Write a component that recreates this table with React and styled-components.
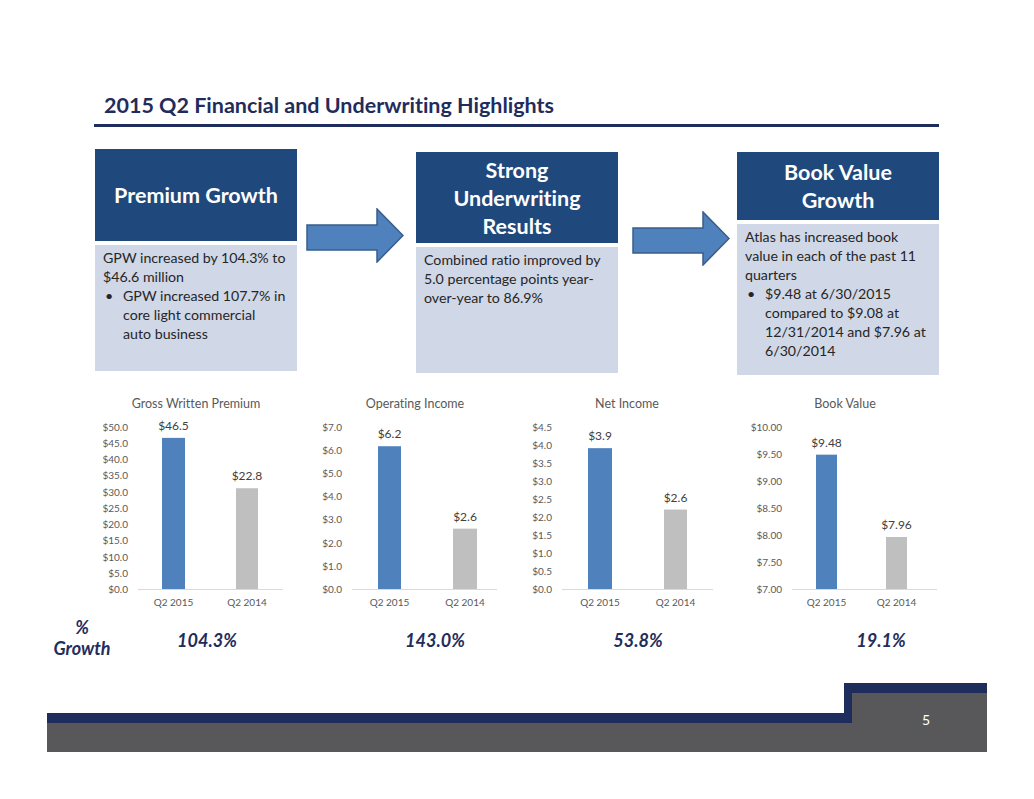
import React from 'react';
import styled, { createGlobalStyle } from 'styled-components';

const NAVY = '#1f2d5c';
const BLUE = '#1f497d';
const BAR_BLUE = '#4f81bd';
const BAR_GREY = '#bfbfbf';

const GlobalStyle = createGlobalStyle`
  body {
    margin: 0;
    background: #fff;
    font-family: Lato, "Open Sans", Arial, sans-serif;
    font-variant-ligatures: none;
  }
`;

// chart frames, in page pixels (x) so they line up with the slide
const CHART_TOP = 393;
const AXIS_TOP = 426.5;
const AXIS_BOTTOM = 589;

const charts = [
  {
    title: 'Gross Written Premium',
    left: 95,
    width: 200,
    titleX: 196,
    ticks: ['$50.0', '$45.0', '$40.0', '$35.0', '$30.0', '$25.0', '$20.0', '$15.0', '$10.0', '$5.0', '$0.0'],
    labelRight: 128,
    axis: [138, 283],
    min: 0,
    max: 50,
    bars: [
      { x: 162, w: 23, value: 46.5, label: '$46.5', color: BAR_BLUE, cat: 'Q2 2015' },
      { x: 236, w: 22, value: 31, label: '$22.8', color: BAR_GREY, cat: 'Q2 2014' },
    ],
  },
  {
    title: 'Operating Income',
    left: 295,
    width: 215,
    titleX: 415,
    ticks: ['$7.0', '$6.0', '$5.0', '$4.0', '$3.0', '$2.0', '$1.0', '$0.0'],
    labelRight: 342,
    axis: [352, 497],
    min: 0,
    max: 7,
    bars: [
      { x: 378, w: 23, value: 6.15, label: '$6.2', color: BAR_BLUE, cat: 'Q2 2015' },
      { x: 453, w: 24, value: 2.6, label: '$2.6', color: BAR_GREY, cat: 'Q2 2014' },
    ],
  },
  {
    title: 'Net Income',
    left: 510,
    width: 222,
    titleX: 627,
    ticks: ['$4.5', '$4.0', '$3.5', '$3.0', '$2.5', '$2.0', '$1.5', '$1.0', '$0.5', '$0.0'],
    labelRight: 552,
    axis: [562, 713],
    min: 0,
    max: 4.5,
    bars: [
      { x: 588, w: 24, value: 3.9, label: '$3.9', color: BAR_BLUE, cat: 'Q2 2015' },
      { x: 664, w: 23, value: 2.2, label: '$2.6', color: BAR_GREY, cat: 'Q2 2014' },
    ],
  },
  {
    title: 'Book Value',
    left: 732,
    width: 215,
    titleX: 845,
    ticks: ['$10.00', '$9.50', '$9.00', '$8.50', '$8.00', '$7.50', '$7.00'],
    labelRight: 782,
    axis: [792, 937],
    min: 7,
    max: 10,
    bars: [
      { x: 816, w: 21, value: 9.48, label: '$9.48', color: BAR_BLUE, cat: 'Q2 2015' },
      { x: 886, w: 21, value: 7.96, label: '$7.96', color: BAR_GREY, cat: 'Q2 2014' },
    ],
  },
];

const growth = [
  { value: '104.3%', gap: 50 },
  { value: '143.0%', gap: 148 },
  { value: '53.8%', gap: 123 },
  { value: '19.1%', gap: 163 },
];

const Arrow = () => (
  <svg width="98" height="55" viewBox="-1 -1 98 55">
    <polygon
      points="0,16 70,16 70,0 96,26.5 70,53 70,41 0,41"
      fill={BAR_BLUE}
      stroke="#385d8a"
      strokeWidth="1.5"
    />
  </svg>
);

const Chart = ({ chart }) => {
  const { left, width } = chart;
  const px = (x) => x - left;
  const py = (y) => y - CHART_TOP;
  const scale = (v) =>
    AXIS_BOTTOM - ((v - chart.min) / (chart.max - chart.min)) * (AXIS_BOTTOM - AXIS_TOP);
  const step = (AXIS_BOTTOM - AXIS_TOP) / (chart.ticks.length - 1);

  return (
    <ChartSvg width={width} height={222} viewBox={`0 0 ${width} 222`}>
      <ChartTitle x={px(chart.titleX)} y={py(403)}>
        {chart.title}
      </ChartTitle>
      {chart.ticks.map((t, i) => (
        <TickLabel key={t} x={px(chart.labelRight)} y={py(AXIS_TOP + i * step)}>
          {t}
        </TickLabel>
      ))}
      {chart.bars.map((b) => {
        const top = scale(b.value);
        return (
          <g key={b.cat}>
            <rect x={px(b.x)} y={py(top)} width={b.w} height={AXIS_BOTTOM - top} fill={b.color} />
            <ValueLabel x={px(b.x + b.w / 2)} y={py(top - 12.5)}>
              {b.label}
            </ValueLabel>
            <CatLabel x={px(b.x + b.w / 2)} y={py(602)}>
              {b.cat}
            </CatLabel>
          </g>
        );
      })}
      <line
        x1={px(chart.axis[0])}
        x2={px(chart.axis[1])}
        y1={py(AXIS_BOTTOM) + 0.5}
        y2={py(AXIS_BOTTOM) + 0.5}
        stroke="#d9d9d9"
        strokeWidth="1"
      />
    </ChartSvg>
  );
};

const App = () => {
  return (
    <Page>
      <GlobalStyle />
      <TitleBar>
        <Title>2015 Q2 Financial and Underwriting Highlights</Title>
        <Rule />
      </TitleBar>

      <Highlights>
        <Card>
          <CardHead $h={92}>Premium Growth</CardHead>
          <CardBody $h={126}>
            GPW increased by 104.3% to
            <br />
            $46.6 million
            <BulletItem>
              <Bullet>•</Bullet>
              <span>
                GPW increased 107.7% in
                <br />
                core light commercial
                <br />
                auto business
              </span>
            </BulletItem>
          </CardBody>
        </Card>

        <ArrowSlot $pad={10} $top={60}>
          <Arrow />
        </ArrowSlot>

        <Card $offset={3}>
          <CardHead $h={91}>
            Strong
            <br />
            Underwriting
            <br />
            Results
          </CardHead>
          <CardBody $h={126}>
            Combined ratio improved by
            <br />
            5.0 percentage points year-
            <br />
            over-year to 86.9%
          </CardBody>
        </Card>

        <ArrowSlot $pad={15} $top={63}>
          <Arrow />
        </ArrowSlot>

        <Card $offset={3}>
          <CardHead $h={68}>
            Book Value
            <br />
            Growth
          </CardHead>
          <CardBody $h={151}>
            Atlas has increased book
            <br />
            value in each of the past 11
            <br />
            quarters
            <BulletItem>
              <Bullet>•</Bullet>
              <span>
                $9.48 at 6/30/2015
                <br />
                compared to $9.08 at
                <br />
                12/31/2014 and $7.96 at
                <br />
                6/30/2014
              </span>
            </BulletItem>
          </CardBody>
        </Card>
      </Highlights>

      <ChartsRow>
        {charts.map((c) => (
          <Chart key={c.title} chart={c} />
        ))}
      </ChartsRow>

      <GrowthRow>
        <GrowthLabel>
          %
          <br />
          Growth
        </GrowthLabel>
        {growth.map((g) => (
          <GrowthValue key={g.value} $gap={g.gap}>
            {g.value}
          </GrowthValue>
        ))}
      </GrowthRow>

      <Footer>
        <FooterMain>
          <FooterStep />
          <FooterBand />
          <FooterBase />
        </FooterMain>
        <FooterTab>5</FooterTab>
      </Footer>
    </Page>
  );
};

const Page = styled.div`
  width: 1034px;
  height: 799px;
  background: #fff;
  overflow: hidden;
  display: flex;
  flex-direction: column;
`;

const TitleBar = styled.div`
  padding: 93px 0 0 94px;
`;

const Title = styled.h1`
  margin: 0 0 0 10px;
  font-size: 21.5px;
  line-height: 24px;
  font-weight: 700;
  color: ${NAVY};
  white-space: nowrap;
`;

const Rule = styled.div`
  width: 845px;
  height: 3px;
  margin-top: 7px;
  background: ${NAVY};
`;

const Highlights = styled.div`
  display: flex;
  align-items: flex-start;
  margin-top: 22px;
  padding-left: 95px;
`;

const Card = styled.div`
  width: 202px;
  margin-top: ${(p) => p.$offset || 0}px;
`;

const CardHead = styled.div`
  height: ${(p) => p.$h}px;
  background: ${BLUE};
  color: #fff;
  display: flex;
  align-items: center;
  justify-content: center;
  text-align: center;
  font-size: 21.5px;
  line-height: 28px;
  font-weight: 700;
`;

const CardBody = styled.div`
  box-sizing: border-box;
  height: ${(p) => p.$h}px;
  margin-top: 4px;
  padding: 3px 8px;
  background: #d0d7e6;
  color: #262626;
  font-size: 14.2px;
  line-height: 19px;
  white-space: nowrap;
`;

const BulletItem = styled.div`
  display: flex;
`;

const Bullet = styled.span`
  width: 18px;
  padding-left: 2px;
  flex-shrink: 0;
`;

const ArrowSlot = styled.div`
  width: 119px;
  box-sizing: border-box;
  padding-left: ${(p) => p.$pad - 1}px;
  padding-top: ${(p) => p.$top - 1}px;
  svg {
    display: block;
  }
`;

const ChartsRow = styled.div`
  display: flex;
  margin-top: 18px;
  padding-left: 95px;
`;

const ChartSvg = styled.svg`
  display: block;
  flex-shrink: 0;
  font-family: Lato, "Open Sans", Arial, sans-serif;
`;

const ChartTitle = styled.text`
  font-size: 12.5px;
  fill: #595959;
  text-anchor: middle;
  dominant-baseline: central;
`;

const TickLabel = styled.text`
  font-size: 10px;
  fill: #595959;
  text-anchor: end;
  dominant-baseline: central;
`;

const ValueLabel = styled.text`
  font-size: 12px;
  fill: #404040;
  text-anchor: middle;
  dominant-baseline: central;
`;

const CatLabel = styled.text`
  font-size: 10px;
  fill: #595959;
  text-anchor: middle;
  dominant-baseline: central;
`;

const GrowthRow = styled.div`
  display: flex;
  align-items: flex-start;
  margin-top: 2px;
  padding-left: 47px;
  color: ${NAVY};
  font-size: 18px;
  line-height: 21px;
  font-weight: 700;
  font-style: italic;
`;

const GrowthLabel = styled.div`
  width: 70px;
  text-align: center;
`;

const GrowthValue = styled.div`
  width: 80px;
  margin-left: ${(p) => p.$gap}px;
  padding-top: 13px;
  text-align: center;
`;

const Footer = styled.div`
  display: flex;
  height: 69px;
  margin: auto 47px 47px;
`;

const FooterMain = styled.div`
  flex: 1;
  display: flex;
  flex-direction: column;
`;

const FooterStep = styled.div`
  height: 30px;
  border-right: 8px solid ${NAVY};
`;

const FooterBand = styled.div`
  height: 10px;
  background: ${NAVY};
`;

const FooterBase = styled.div`
  flex: 1;
  background: #58585a;
`;

const FooterTab = styled.div`
  width: 135px;
  box-sizing: border-box;
  border-top: 10px solid ${NAVY};
  background: #58585a;
  padding: 18px 0 0 70px;
  color: #fff;
  font-size: 14px;
  line-height: 18px;
`;

export default App;
